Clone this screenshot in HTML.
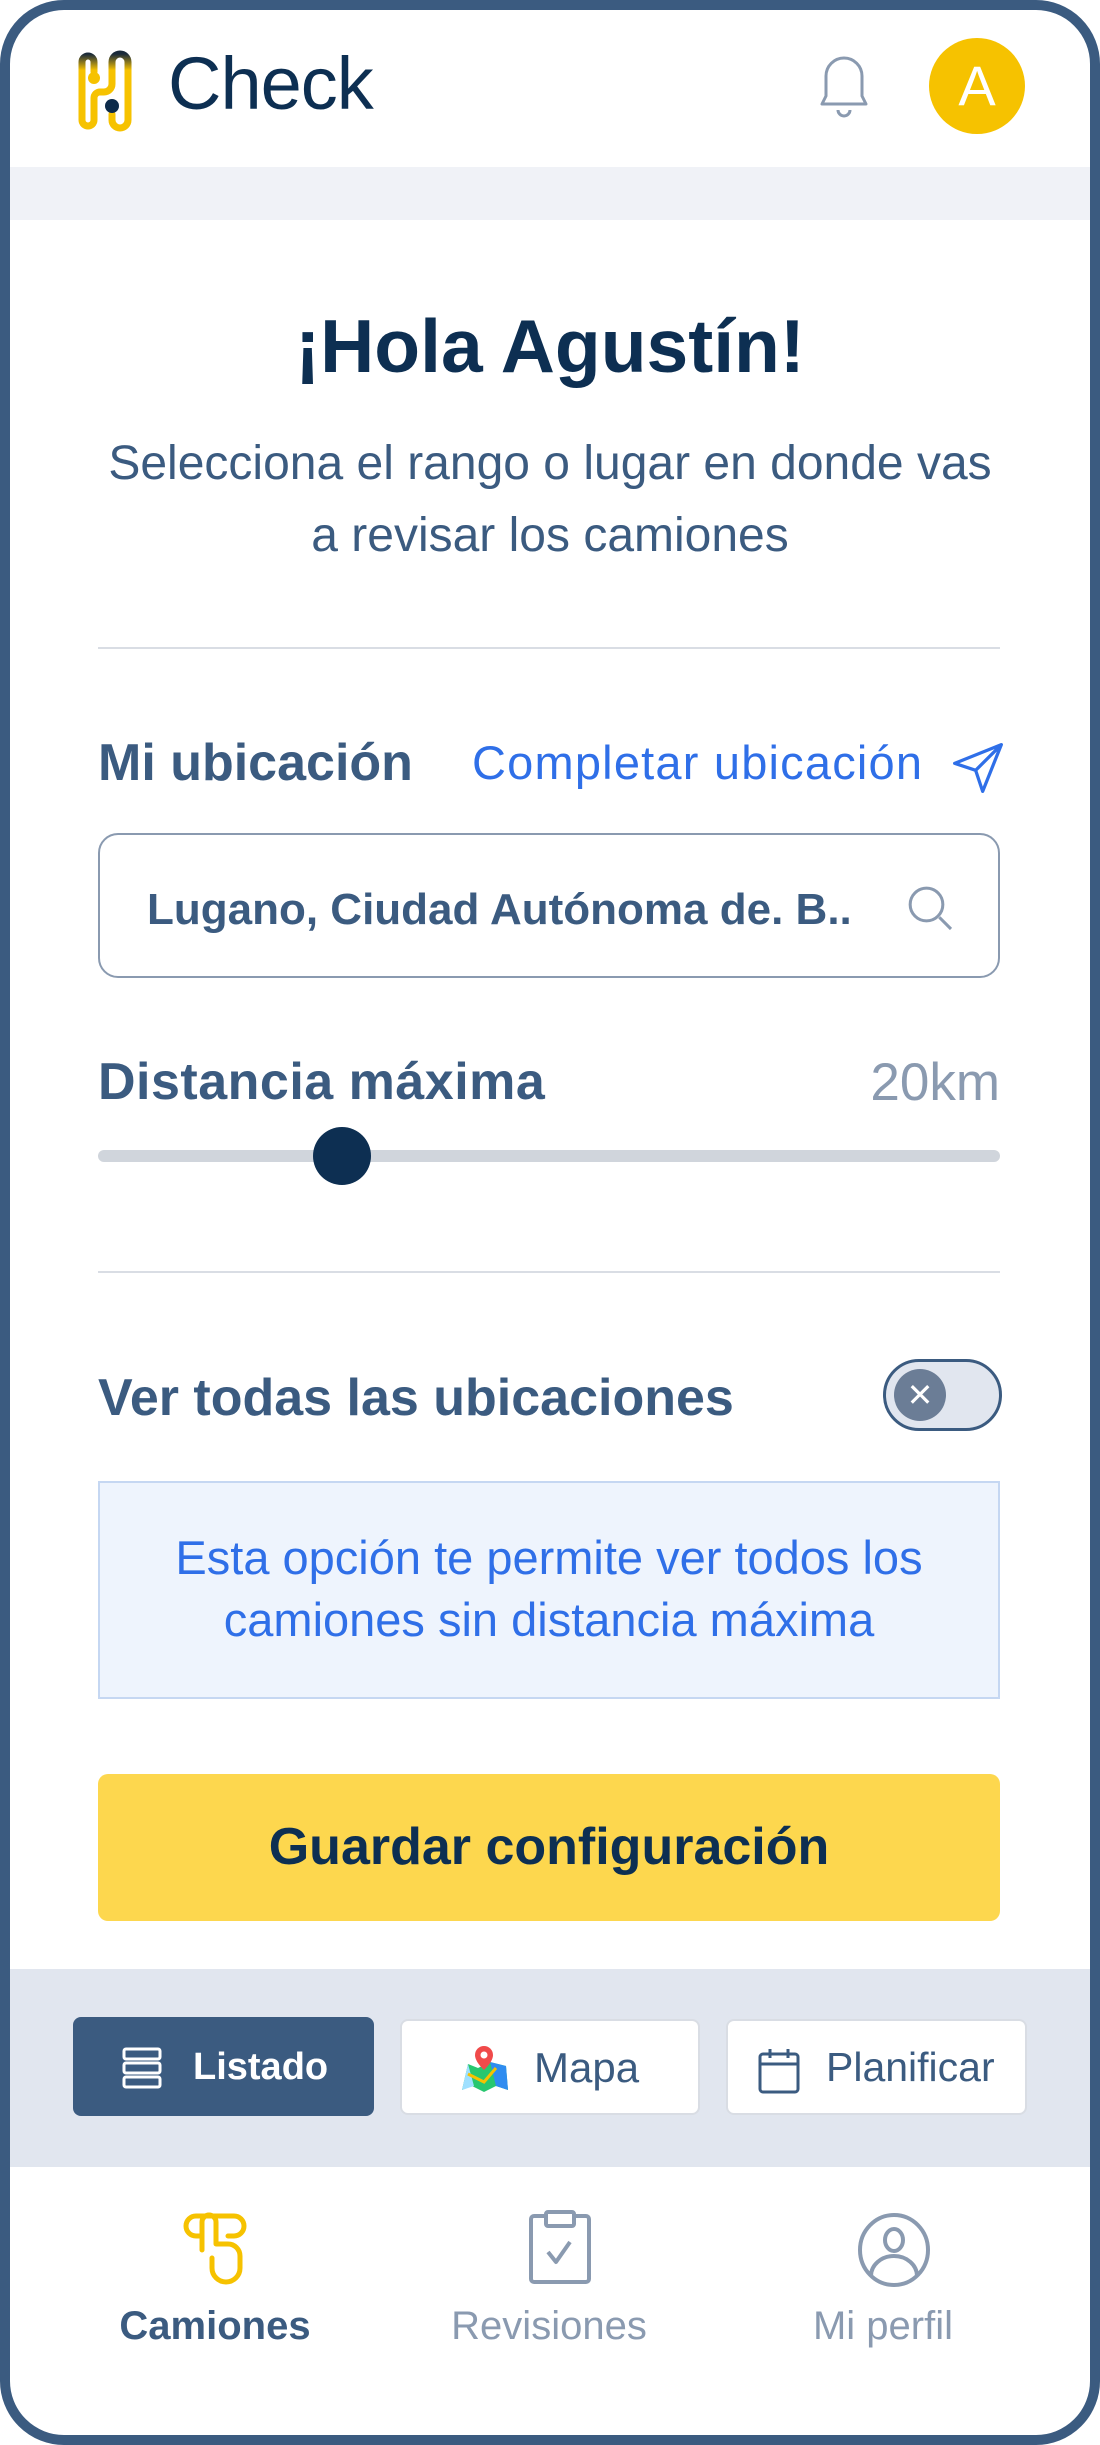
<!DOCTYPE html>
<html><head><meta charset="utf-8"><style>
*{margin:0;padding:0;box-sizing:border-box}
body{width:1100px;height:2445px;background:#fff;font-family:"Liberation Sans",sans-serif;position:relative;overflow:hidden}
.frame{position:absolute;left:0;top:0;width:1100px;height:2445px;border:10px solid #3b5b80;border-radius:64px;overflow:hidden;background:#fff}
.a{position:absolute}
.c{text-align:center}
</style></head><body>
<div class="frame">
  <div class="a" style="left:0;top:157px;width:1080px;height:53px;background:#f0f2f7"></div>
  <!-- logo -->
  <svg class="a" style="left:60px;top:38px" width="74" height="86" viewBox="0 0 74 86">
    <defs><linearGradient id="g" x1="0" y1="0" x2="0" y2="1"><stop offset="0" stop-color="#1a2a3a"/><stop offset="0.22" stop-color="#f6c200"/><stop offset="1" stop-color="#f6c200"/></linearGradient></defs>
    <path d="M12 14 a6 6 0 0 1 12 0 V24 M12 14 V72 a6 6 0 0 0 12 0 V50 a6 6 0 0 1 6 -6 h4 a8 8 0 0 0 8 -8 V14 a8 8 0 0 1 16 0 V72 a8 8 0 0 1 -16 0 V66" fill="none" stroke="url(#g)" stroke-width="7" stroke-linecap="round" stroke-linejoin="round"/>
    <circle cx="24" cy="30" r="6" fill="#f6c200"/>
    <circle cx="42" cy="58" r="7" fill="#0d2b4a"/>
  </svg>
  <div class="a" style="left:158px;top:31px;font-size:74px;color:#0d2f52;letter-spacing:-1px">Check</div>
  <!-- bell -->
  <svg class="a" style="left:804px;top:42px" width="60" height="70" viewBox="0 0 60 70">
    <path d="M8 52 h44 l-4 -8 V24 a18 18 0 0 0 -36 0 V44 z" fill="none" stroke="#8a9ab0" stroke-width="3" stroke-linejoin="round"/>
    <path d="M24 58 a6 6 0 0 0 12 0" fill="none" stroke="#8a9ab0" stroke-width="3"/>
  </svg>
  <div class="a c" style="left:919px;top:28px;width:96px;height:96px;border-radius:50%;background:#f6c200;color:#fff;font-size:56px;line-height:96px">A</div>

  <div class="a c" style="left:0;width:1080px;top:293px;font-size:75px;font-weight:bold;color:#0d2f52">¡Hola Agustín!</div>
  <div class="a c" style="left:0;width:1080px;top:418px;font-size:48px;line-height:72px;color:#3b5b80">Selecciona el rango o lugar en donde vas<br>a revisar los camiones</div>
  <div class="a" style="left:88px;top:637px;width:902px;height:2px;background:#d9dde4"></div>

  <div class="a" style="left:88px;top:723px;font-size:52px;font-weight:bold;color:#3b5b80">Mi ubicación</div>
  <div class="a" style="left:462px;top:725px;font-size:47px;letter-spacing:1.2px;color:#2f6fe8">Completar ubicación</div>
  <svg class="a" style="left:940px;top:730px" width="56" height="56" viewBox="0 0 24 24"><path d="M22 2 L2 10 l9 3 3 9 z M22 2 L11 13" fill="none" stroke="#2f6fe8" stroke-width="1.4" stroke-linejoin="round"/></svg>

  <div class="a" style="left:88px;top:823px;width:902px;height:145px;border:2.5px solid #8a9ab0;border-radius:20px"></div>
  <div class="a" style="left:137px;top:875px;font-size:44px;font-weight:bold;color:#3b5b80">Lugano, Ciudad Autónoma de. B..</div>
  <svg class="a" style="left:892px;top:870px" width="56" height="56" viewBox="0 0 24 24"><circle cx="10.5" cy="10.5" r="7" fill="none" stroke="#8a9ab0" stroke-width="1.3"/><path d="M16 16 L21 21" stroke="#8a9ab0" stroke-width="1.3"/></svg>

  <div class="a" style="left:88px;top:1042px;font-size:52px;letter-spacing:0.5px;font-weight:bold;color:#3b5b80">Distancia máxima</div>
  <div class="a" style="right:90px;top:1042px;font-size:53px;color:#8a9ab0">20km</div>
  <div class="a" style="left:88px;top:1140px;width:902px;height:12px;border-radius:6px;background:#d0d5dc"></div>
  <div class="a" style="left:303px;top:1117px;width:58px;height:58px;border-radius:50%;background:#0d2f52"></div>
  <div class="a" style="left:88px;top:1261px;width:902px;height:2px;background:#d9dde4"></div>

  <div class="a" style="left:88px;top:1358px;font-size:52px;font-weight:bold;color:#3b5b80">Ver todas las ubicaciones</div>
  <div class="a" style="left:873px;top:1349px;width:119px;height:72px;border-radius:36px;border:3px solid #3b5b80;background:#e1e6ef"></div>
  <div class="a c" style="left:884px;top:1359px;width:52px;height:52px;border-radius:50%;background:#6b7d96;color:#fff;font-size:32px;line-height:52px">✕</div>

  <div class="a c" style="left:88px;top:1471px;width:902px;height:218px;background:#eef4fd;border:2px solid #c5d7f2;font-size:47px;line-height:62px;color:#2f6fe8;padding-top:44px">Esta opción te permite ver todos los<br>camiones sin distancia máxima</div>

  <div class="a c" style="left:88px;top:1764px;width:902px;height:147px;background:#fdd74e;border-radius:10px;font-size:52px;font-weight:bold;color:#0d2f52;line-height:147px">Guardar configuración</div>

  <div class="a" style="left:0;top:1959px;width:1080px;height:198px;background:#e1e6ef"></div>
  <div class="a" style="left:63px;top:2007px;width:301px;height:99px;border-radius:8px;background:#3b5b80"></div>
  <svg class="a" style="left:112px;top:2037px" width="40" height="42" viewBox="0 0 40 42"><g fill="none" stroke="#fff" stroke-width="3"><rect x="2" y="2" width="36" height="10" rx="2"/><rect x="2" y="16" width="36" height="10" rx="2"/><rect x="2" y="30" width="36" height="10" rx="2"/></g></svg>
  <div class="a" style="left:183px;top:2036px;font-size:38px;font-weight:bold;color:#fff">Listado</div>

  <div class="a" style="left:390px;top:2009px;width:300px;height:96px;border-radius:8px;background:#fff;border:2px solid #d9dde4"></div>
  <svg class="a" style="left:450px;top:2036px" width="50" height="50" viewBox="0 0 50 50"><path d="M2 44 L8 18 L18 22 L30 16 L46 20 L48 44 L36 40 L24 46 L12 40 z" fill="#28c76f"/><path d="M2 44 L8 18 L14 40 z" fill="#9fe0ff"/><path d="M30 16 L46 20 L48 44 L36 40 z" fill="#2f8cf0"/><path d="M8 28 L24 36 L36 22" fill="none" stroke="#f6c200" stroke-width="3"/><path d="M24 0 a9 9 0 0 1 9 9 c0 7 -9 15 -9 15 s-9 -8 -9 -15 a9 9 0 0 1 9 -9z" fill="#f04a4a"/><circle cx="24" cy="9" r="3.5" fill="#fff"/></svg>
  <div class="a" style="left:524px;top:2034px;font-size:42px;color:#3b5b80">Mapa</div>

  <div class="a" style="left:716px;top:2009px;width:301px;height:96px;border-radius:8px;background:#fff;border:2px solid #d9dde4"></div>
  <svg class="a" style="left:748px;top:2038px" width="42" height="46" viewBox="0 0 42 46"><g fill="none" stroke="#3b5b80" stroke-width="3"><rect x="2" y="6" width="38" height="38" rx="3"/><path d="M2 16 H40 M12 1 V10 M30 1 V10"/></g></svg>
  <div class="a" style="left:816px;top:2034px;font-size:41px;color:#3b5b80">Planificar</div>

  <!-- bottom nav -->
  <svg class="a" style="left:172px;top:2200px" width="66" height="76" viewBox="0 0 66 76"><path d="M20 40 V12 a7 7 0 0 1 14 0 V34 h12 a12 12 0 0 1 12 12 v12 a14 14 0 0 1 -28 0 V48 M20 26 h-6 a10 10 0 0 1 0 -20 h38 a10 10 0 0 1 0 20 h-6" fill="none" stroke="#f6c200" stroke-width="5" stroke-linecap="round" stroke-linejoin="round"/></svg>
  <div class="a c" style="left:95px;width:220px;top:2294px;font-size:40px;font-weight:bold;color:#3b5b80">Camiones</div>

  <svg class="a" style="left:518px;top:2200px" width="64" height="76" viewBox="0 0 64 76"><g fill="none" stroke="#8a9ab0" stroke-width="4" stroke-linejoin="round"><rect x="3" y="6" width="58" height="66" rx="3"/><rect x="18" y="2" width="28" height="14" rx="2" fill="#fff"/><path d="M20 42 L28 52 L42 32"/></g></svg>
  <div class="a c" style="left:429px;width:220px;top:2294px;font-size:40px;color:#8a9ab0">Revisiones</div>

  <svg class="a" style="left:847px;top:2202px" width="74" height="76" viewBox="0 0 74 76"><g fill="none" stroke="#8a9ab0" stroke-width="4"><ellipse cx="37" cy="38" rx="34" ry="35"/><ellipse cx="37" cy="28" rx="9" ry="11"/><path d="M14 64 a23 20 0 0 1 46 0"/></g></svg>
  <div class="a c" style="left:763px;width:220px;top:2294px;font-size:40px;color:#8a9ab0">Mi perfil</div>
</div>
</body></html>
